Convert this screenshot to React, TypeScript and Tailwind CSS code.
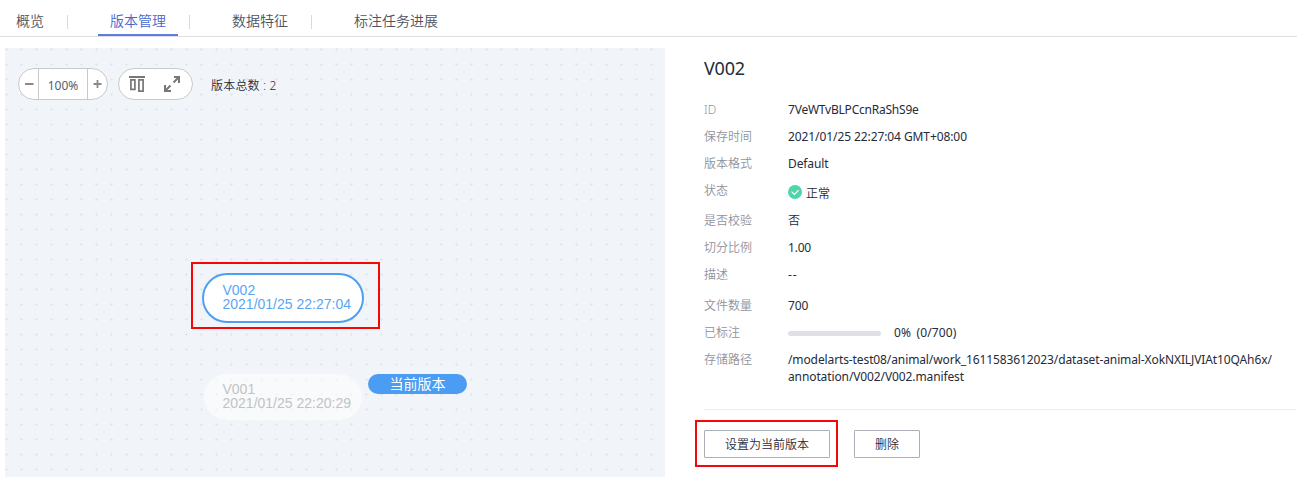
import type { ReactNode } from "react";

const tabs = [
  { label: "概览", box: "ml-[16px]", active: false },
  { label: "版本管理", box: "ml-[30px] w-[80px]", active: true },
  { label: "数据特征", box: "ml-[42px]", active: false },
  { label: "标注任务进展", box: "ml-[42px]", active: false },
];

const separators = ["ml-[23px]", "ml-[11px]", "ml-[23px]"];

function Tabs() {
  return (
    <nav className="flex h-[37px] border-b border-[#dfdfe1] text-[14px] leading-[20px] text-[#4d5362]">
      {tabs.map((tab, i) => (
        <div key={tab.label} className="flex">
          <div
            className={`${tab.box} flex h-[36px] justify-center pt-[11px] ${
              tab.active ? "border-b-2 border-[#5e7ce0] text-[#4a67cb]" : ""
            }`}
          >
            {tab.label}
          </div>
          {i < separators.length && (
            <div className={`${separators[i]} mt-[15px] h-[14px] w-px bg-[#d9dadf]`} />
          )}
        </div>
      ))}
    </nav>
  );
}

function Toolbar() {
  return (
    <div className="relative flex items-center pl-[13px] pt-[20px]">
      <div className="flex h-[32px] w-[90px] overflow-hidden rounded-full border border-[#c9c9c9] bg-white text-[12px] text-[#575d6c]">
        <div className="flex w-[20px] border-r border-[#c9c9c9] pl-[6px] pt-[11px]">
          <svg width="9" height="8" viewBox="0 0 9 8">
            <path d="M0 4h8.5" stroke="#8a8a8a" strokeWidth="2" />
          </svg>
        </div>
        <div className="flex flex-1 items-center justify-center pt-[3px] font-normal">100%</div>
        <div className="flex w-[20px] border-l border-[#c9c9c9] pl-[5px] pt-[11px]">
          <svg width="9" height="8" viewBox="0 0 9 8">
            <path d="M0.5 4h8M4.5 0v8" stroke="#8a8a8a" strokeWidth="1.8" />
          </svg>
        </div>
      </div>
      <div className="ml-[10px] flex h-[32px] w-[75px] rounded-full border border-[#c9c9c9] bg-white pl-[10px] pt-[7px]">
        <svg width="16" height="17" viewBox="0 0 16 17" fill="none" stroke="#777" strokeWidth="1.7">
          <path d="M0 1h16" strokeWidth="2" />
          <path d="M1.9 3.9h4v9.5h-4zM9.9 3.9h4.2v11.3H9.9z" />
        </svg>
        <svg width="16" height="16" viewBox="0 0 16 16" fill="none" stroke="#777" strokeWidth="2" className="ml-[19px]">
          <path d="M10 1h5v6M15 1L9.5 6.5M1 9v6h6M1 15l5.5-5.5" />
        </svg>
      </div>
      <div className="ml-[18px] mt-[3px] text-[12px] tracking-[0.2px] text-[#252b3a]">版本总数 : 2</div>
    </div>
  );
}

function Canvas() {
  return (
    <section className="relative h-[429px] w-[660px] shrink-0 overflow-hidden bg-[#f1f5f9]">
      <svg width="660" height="429" className="absolute inset-0">
        <defs>
          <pattern id="grid" width="15" height="15" patternUnits="userSpaceOnUse">
            <path d="M0 1h3v1H0zM1 0h1v3H1z" fill="#e3e6ea" />
          </pattern>
        </defs>
        <rect width="660" height="429" fill="url(#grid)" />
      </svg>
      <Toolbar />
      <div className="absolute left-[197px] top-[225px] h-[50px] w-[162px] rounded-[25px] border-2 border-[#4e9ff0] bg-white pl-[18.5px] pt-[8px] font-['Liberation_Sans',sans-serif] text-[14px] font-normal leading-[14px] text-[#5aa6f2]">
        <div>V002</div>
        <div className="whitespace-nowrap">2021/01/25 22:27:04</div>
      </div>
      <div className="absolute left-[198px] top-[325px] h-[48px] w-[160px] rounded-[24px] border border-[#f4f5f7] bg-white/50 pl-[18.5px] pt-[8px] font-['Liberation_Sans',sans-serif] text-[14px] font-normal leading-[14px] text-[#c2c3c5]">
        <div>V001</div>
        <div className="whitespace-nowrap">2021/01/25 22:20:29</div>
      </div>
      <div className="absolute left-[363px] top-[326px] flex h-[20px] w-[99px] items-center justify-center rounded-full bg-[#4a9df2] pb-px text-[14px] font-normal leading-[19px] text-white">
        当前版本
      </div>
      <div className="absolute left-[186px] top-[214px] h-[67px] w-[189px] border-2 border-[#f60606]" />
    </section>
  );
}

type RowProps = { label: string; box: string; text?: string; children: ReactNode };

function Row({ label, box, text = "font-normal", children }: RowProps) {
  return (
    <div className={`flex ${box}`}>
      <dt className="w-[84px] shrink-0 text-[#8f929b]">{label}</dt>
      <dd className={`whitespace-nowrap ${text}`}>{children}</dd>
    </div>
  );
}

function Details() {
  return (
    <section className="ml-[39px] flex-1 text-[#252b3a]">
      <h2 className="pt-[8px] text-[18px] font-normal leading-[24px] tracking-[-0.2px]">V002</h2>
      <dl className="mt-[21px] text-[12px] leading-[17px]">
        <Row label="ID" box="h-[27px]" text="font-normal tracking-[-0.22px]">7VeWTvBLPCcnRaShS9e</Row>
        <Row label="保存时间" box="h-[27px]" text="font-normal tracking-[-0.09px]">
          2021/01/25 22:27:04 GMT+08:00
        </Row>
        <Row label="版本格式" box="h-[27px]" text="font-normal tracking-[-0.1px]">Default</Row>
        <Row label="状态" box="h-[30px]" text="">
          <span className="flex pt-[3px]">
            <svg width="14" height="14" viewBox="0 0 14 14" className="mr-[4px]">
              <circle cx="7" cy="7" r="7" fill="#50d4ab" />
              <path d="M3.6 6.7l2.7 2.7 4.4-4.3" fill="none" stroke="#fff" strokeWidth="1.1" />
            </svg>
            正常
          </span>
        </Row>
        <Row label="是否校验" box="h-[27px]" text="">否</Row>
        <Row label="切分比例" box="h-[27px]" text="font-normal tracking-[-0.2px]">1.00</Row>
        <Row label="描述" box="h-[31px]" text="font-normal tracking-[1px]">--</Row>
        <Row label="文件数量" box="h-[27px]" text="font-normal tracking-[-0.1px]">700</Row>
        <Row label="已标注" box="h-[27px]" text="font-normal tracking-[0.15px]">
          <span className="flex items-center [word-spacing:2px]">
            <span className="mr-[13px] mt-[2px] h-[5px] w-[93px] rounded-full bg-[#dfe1e6]" />
            0% (0/700)
          </span>
        </Row>
        <Row label="存储路径" box="h-[58px]" text="font-normal tracking-[-0.11px]">
          /modelarts-test08/animal/work_1611583612023/dataset-animal-XokNXILJVIAt10QAh6x/
          <br />
          annotation/V002/V002.manifest
        </Row>
      </dl>
      <div className="relative mr-px flex gap-[24px] border-t border-[#ececee] pt-[20px] text-[12px]">
        <button className="h-[28px] w-[126px] rounded-[1px] border border-[#adb0b8] bg-white pt-[2px]">设置为当前版本</button>
        <button className="h-[28px] w-[66px] rounded-[1px] border border-[#adb0b8] bg-white pt-[2px]">删除</button>
        <div className="absolute left-[-9px] top-[10px] h-[47px] w-[143px] border-2 border-[#f60606]" />
      </div>
    </section>
  );
}

export default function App() {
  return (
    <div className="h-[477px] w-[1297px] overflow-hidden bg-white font-['Noto_Sans','Noto_Sans_CJK_SC',sans-serif] font-[350]">
      <Tabs />
      <main className="flex pl-[5px] pt-[11px]">
        <Canvas />
        <Details />
      </main>
    </div>
  );
}
